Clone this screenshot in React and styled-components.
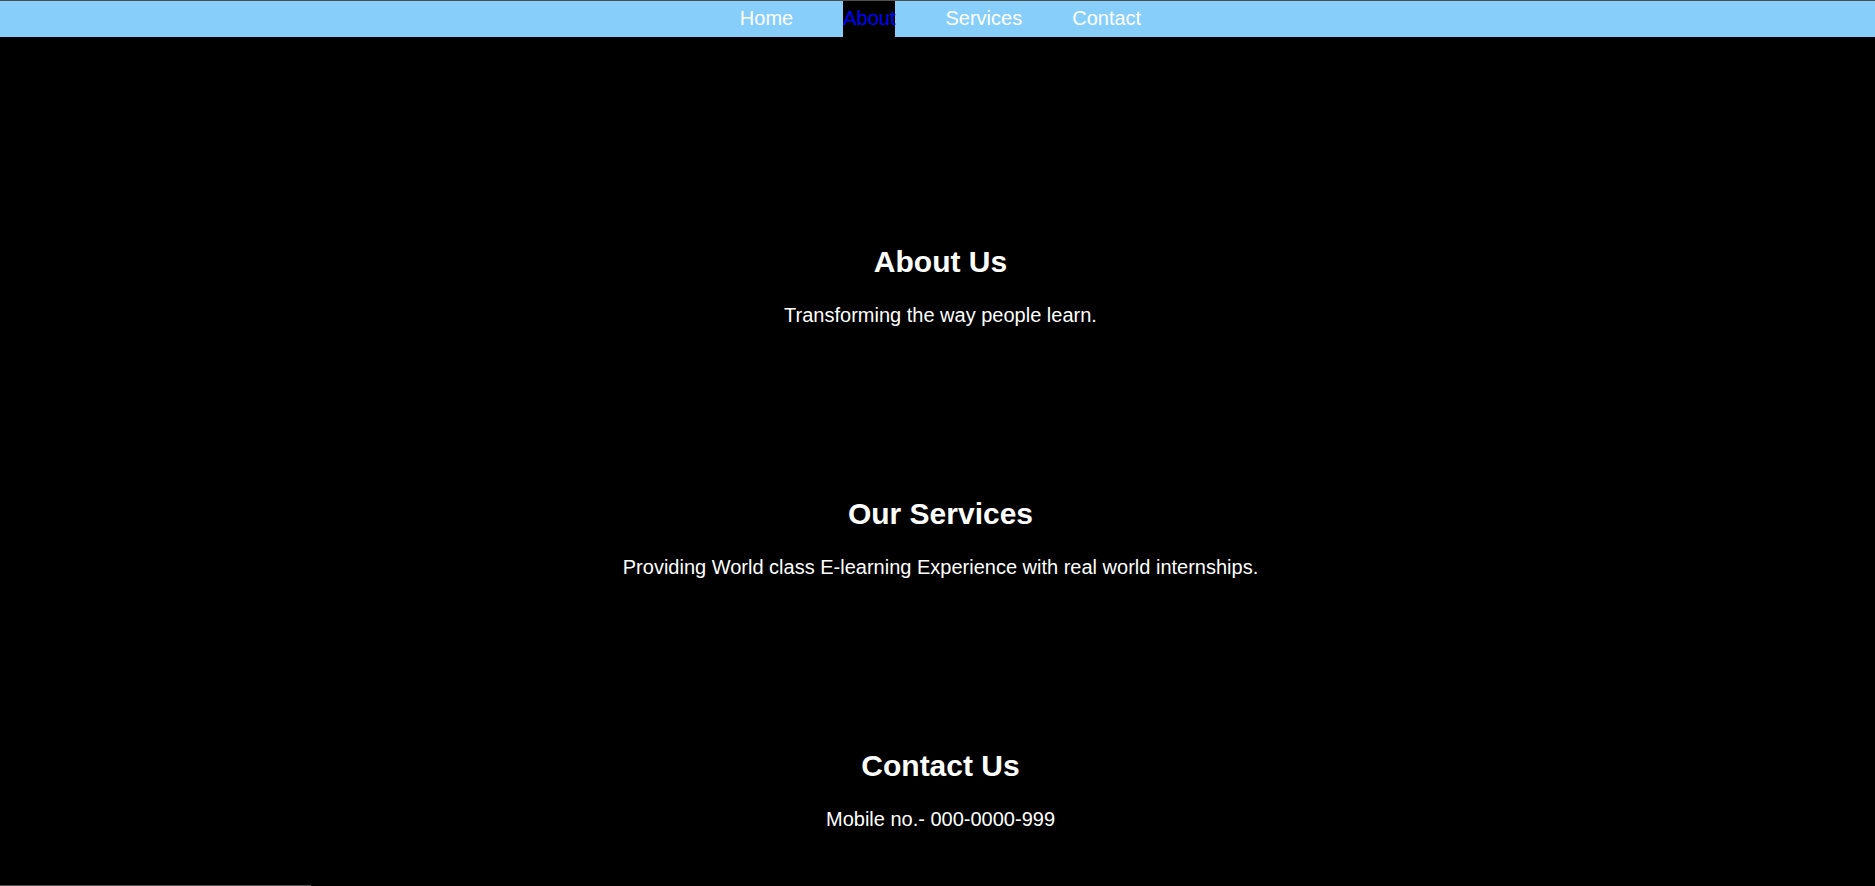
import styled, { createGlobalStyle } from 'styled-components';

const GlobalStyle = createGlobalStyle`
  body {
    margin: 0;
    background-color: #000000;
    color: #ffffff;
    font-family: 'Liberation Sans', Arial, sans-serif;
    font-size: 20px;
  }
`;

const links = ['Home', 'About', 'Services', 'Contact'];

const sections = [
  { title: 'About Us', text: 'Transforming the way people learn.' },
  {
    title: 'Our Services',
    text: 'Providing World class E-learning Experience with real world internships.',
  },
  { title: 'Contact Us', text: 'Mobile no.- 000-0000-999' },
];

export default function App() {
  return (
    <>
      <GlobalStyle />
      <NavBar>
        {links.map((link) => (
          <NavLink key={link} href={`#${link.toLowerCase()}`} active={link === 'About' ? 1 : 0}>
            {link}
          </NavLink>
        ))}
      </NavBar>
      <Main>
        {sections.map((section) => (
          <Section key={section.title}>
            <Title>{section.title}</Title>
            <Text>{section.text}</Text>
          </Section>
        ))}
      </Main>
      <ScrollLine />
    </>
  );
}

const NavBar = styled.nav`
  display: flex;
  justify-content: center;
  align-items: stretch;
  gap: 50px;
  height: 36px;
  padding-left: 6px;
  background-color: #87cefa;
  border-top: 1px solid #4f4f4f;
`;

const NavLink = styled.a`
  display: flex;
  align-items: center;
  padding-bottom: 1px;
  color: ${({ active }) => (active ? '#0000ff' : '#ffffff')};
  background-color: ${({ active }) => (active ? '#000000' : 'transparent')};
  text-decoration: none;
`;

const Main = styled.main`
  padding-top: 121px;
  padding-left: 6px;
`;

const Section = styled.section`
  padding: 62.6px 0;
  text-align: center;
`;

const Title = styled.h2`
  margin: 0.83em 0;
  font-size: 30px;
  font-weight: 700;
`;

const Text = styled.p`
  margin: 20px 0;
`;

const ScrollLine = styled.div`
  position: fixed;
  left: 0;
  bottom: 0;
  width: 311px;
  height: 1px;
  background-color: #4f4f4f;
`;
